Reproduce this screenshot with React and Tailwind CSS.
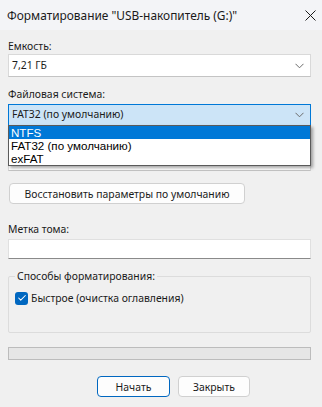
import { Check } from "lucide-react";

const ui = { fontFamily: '"Noto Sans", "Segoe UI", sans-serif' };
const list = { fontFamily: '"Liberation Sans", Arial, sans-serif' };

function Chevron() {
  return (
    <svg width="9" height="6" viewBox="0 0 9 6" className="shrink-0">
      <path d="M0.5 0.8 L4.5 4.8 L8.5 0.8" fill="none" stroke="#6b6b6b" strokeWidth="1" />
    </svg>
  );
}

function Label({ children, className = "" }) {
  return <div className={`h-[16px] text-[10.4px] leading-[16px] text-[#1a1a1a] ${className}`}>{children}</div>;
}

export default function App() {
  return (
    <div className="w-[322px] h-[407px] bg-[#f0f0f0] overflow-hidden select-none" style={ui}>
      {/* title bar */}
      <div className="h-[30px] bg-[#f3f4f7] flex items-center justify-between pl-[7px] pr-[6px]">
        <span className="text-[11.9px] text-[#1a1a1a] leading-[16px]">Форматирование "USB-накопитель (G:)"</span>
        <svg width="11" height="11" viewBox="0 0 11 11">
          <path d="M0.5 0.5 L10.5 10.5 M10.5 0.5 L0.5 10.5" stroke="#1a1a1a" strokeWidth="1" />
        </svg>
      </div>

      <div className="pl-[8px] pr-[11px]">
        <Label className="mt-[8px]">Емкость:</Label>
        <div className="h-[23px] bg-white border border-[#d9d9d9] border-b-[#c4c4c4] flex items-center justify-between pl-[3px] pr-[6px] text-[10.4px] text-[#1a1a1a]">
          <span>7,21 ГБ</span>
          <Chevron />
        </div>

        <Label className="mt-[9px]">Файловая система:</Label>
        <div className="relative mt-[2px]">
          <div className="h-[22px] bg-[#cce4f7] border border-[#0078d7] flex items-center justify-between pl-[3px] pr-[6px] text-[10.4px] text-[#1a1a1a]">
            <span>FAT32 (по умолчанию)</span>
            <Chevron />
          </div>

          {/* open list */}
          <div
            className="absolute left-0 top-[21px] w-[303px] z-10 bg-white border border-[#5a5a5a] shadow-[2px_2px_3px_rgba(0,0,0,0.35)] text-[11.6px] text-black leading-[13px]"
            style={list}
          >
            <div className="h-[13px] bg-[#0078d7] text-white pl-[2px]">NTFS</div>
            <div className="h-[13px] pl-[2px]">FAT32 (по умолчанию)</div>
            <div className="h-[13px] pl-[2px]">exFAT</div>
          </div>

          {/* covered by the list: allocation unit size row */}
          <div className="mt-[4px] h-[16px]" />
          <div className="mt-[2px] h-[23px] bg-white border border-[#d9d9d9] border-b-[#c4c4c4]" />
        </div>

        <button className="mt-[12px] ml-[1px] h-[21px] w-[236px] whitespace-nowrap bg-[#fdfdfd] border border-[#d0d0d0] rounded-[4px] text-[10.4px] text-[#1a1a1a] leading-[16px]">
          Восстановить параметры по умолчанию
        </button>

        <Label className="mt-[17px]">Метка тома:</Label>
        <div className="mt-[2px] h-[20px] bg-white border border-[#e0e0e0] border-b-[#8a8a8a]" />

        {/* format options group */}
        <div className="relative mt-[17px] h-[57px] border border-[#dcdcdc] rounded-[2px] px-[6px]">
          <div className="absolute -top-[9px] left-[6px] bg-[#f0f0f0] px-[2px] text-[10.4px] leading-[16px] text-[#1a1a1a]">
            Способы форматирования:
          </div>
          <div className="mt-[13px] flex items-center gap-[3px]">
            <span className="w-[13px] h-[13px] rounded-[3px] bg-[#0067c0] flex items-center justify-center">
              <Check size={10} color="white" strokeWidth={2.5} />
            </span>
            <span className="text-[10.4px] leading-[16px] text-[#1a1a1a]">Быстрое (очистка оглавления)</span>
          </div>
        </div>

        {/* progress */}
        <div className="mt-[14px] h-[13px] bg-[#e6e6e6] border border-[#bcbcbc]" />

        <div className="mt-[16px] flex gap-[8px] pl-[89px]">
          <button className="w-[73px] h-[21px] bg-[#fdfdfd] border border-[#0067c0] rounded-[4px] text-[10.4px] text-[#1a1a1a] leading-[16px]">
            Начать
          </button>
          <button className="w-[72px] h-[21px] bg-[#fdfdfd] border border-[#d0d0d0] rounded-[4px] text-[10.4px] text-[#1a1a1a] leading-[16px]">
            Закрыть
          </button>
        </div>
      </div>
    </div>
  );
}
